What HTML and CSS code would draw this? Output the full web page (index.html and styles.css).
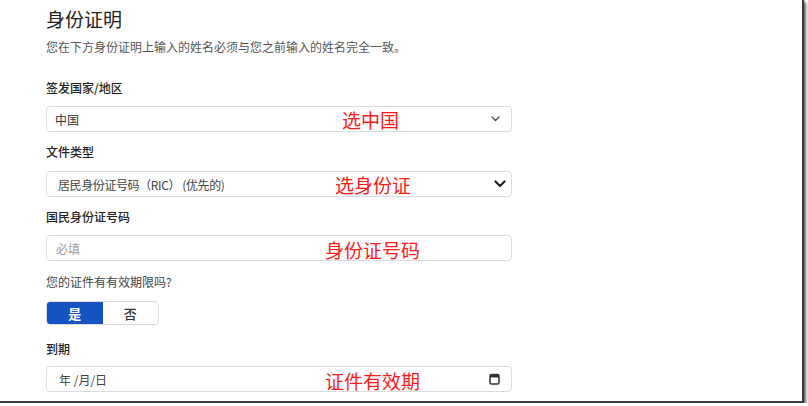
FILE: index.html
```html
<!DOCTYPE html>
<html lang="zh-CN">
<head>
<meta charset="utf-8">
<title>身份证明</title>
<link rel="stylesheet" href="styles.css">
</head>
<body>
<div class="frame">
  <div class="form">
    <h1 class="title">身份证明</h1>
    <p class="subtitle">您在下方身份证明上输入的姓名必须与您之前输入的姓名完全一致。</p>

    <div class="label l1">签发国家/地区</div>
    <div class="field select-a">
      <span class="value">中国</span>
      <svg class="chev-a" width="9" height="6" viewBox="0 0 9 6"><path d="M1 1l3.5 3.5L8 1" stroke="#4a4a4a" stroke-width="1.3" fill="none" stroke-linecap="round" stroke-linejoin="round"/></svg>
      <span class="note n1">选中国</span>
    </div>

    <div class="label l2">文件类型</div>
    <div class="field select-b">
      <span class="value">居民身份证号码（RIC） (优先的)</span>
      <svg class="chev-b" width="12" height="8" viewBox="0 0 12 8"><path d="M1.5 1.5L6 6l4.5-4.5" stroke="#222" stroke-width="2.2" fill="none" stroke-linecap="round" stroke-linejoin="round"/></svg>
      <span class="note n2">选身份证</span>
    </div>

    <div class="label l3">国民身份证号码</div>
    <div class="field text-input">
      <span class="placeholder">必填</span>
      <span class="note n3">身份证号码</span>
    </div>

    <div class="label question">您的证件有有效期限吗?</div>
    <div class="toggle">
      <span class="opt active">是</span>
      <span class="opt">否</span>
    </div>

    <div class="label l4">到期</div>
    <div class="field date-input">
      <span class="value date">年 /月/日</span>
      <svg class="cal" width="11" height="12" viewBox="0 0 11 12"><rect x="1" y="1.5" width="9" height="9.5" rx="1.5" stroke="#333" stroke-width="1.5" fill="none"/><rect x="1" y="1.5" width="9" height="3" fill="#333"/></svg>
      <span class="note n4">证件有效期</span>
    </div>
  </div>
</div>
</body>
</html>
```
FILE: styles.css
```css
html, body {
  margin: 0;
  padding: 0;
  background: #ffffff;
}
body {
  font-family: "Noto Sans CJK SC", "Liberation Sans", sans-serif;
  color: #222;
}
.frame {
  width: 802px;
  height: 401px;
  background: #fff;
  border-right: 2px solid #3c3c3c;
  border-bottom: 2px solid #3c3c3c;
  box-shadow: 1px 1px 2px rgba(0,0,0,0.55), 3px 3px 3px rgba(0,0,0,0.3);
  overflow: hidden;
}
.form {
  padding-left: 46px;
  width: 466px;
  display: flex;
  flex-direction: column;
}
.title {
  margin: 6px 0 0;
  font-size: 19px;
  line-height: 26px;
  font-weight: 400;
  color: #222;
}
.subtitle {
  margin: 6px 0 0;
  font-size: 12px;
  line-height: 18px;
  color: #555;
}
.label {
  font-size: 12px;
  line-height: 16px;
  font-weight: 500;
  color: #222;
}
.l1 { margin-top: 24px; }
.l2 { margin-top: 12px; }
.l3 { margin-top: 12px; }
.question { margin-top: 13px; font-weight: 400; color: #444; }
.l4 { margin-top: 16px; }

.field {
  position: relative;
  box-sizing: border-box;
  height: 26px;
  border: 1px solid #dcdcdc;
  border-radius: 4px;
  display: flex;
  align-items: center;
  justify-content: space-between;
  font-size: 12px;
  background: #fff;
}
.select-a { margin-top: 10px; padding: 0 11px 0 8px; }
.select-b { margin-top: 11px; padding: 0 5px 0 11px; }
.text-input { margin-top: 10px; padding: 0 9px; }
.date-input { margin-top: 9px; padding: 0 11px 0 12px; }
.value { color: #333; }
.select-b .value { color: #444; letter-spacing: -0.4px; }
.placeholder { color: #9a9a9a; }
.date { color: #444; }
.note {
  position: absolute;
  top: 50%;
  transform: translateY(-50%);
  font-size: 19px;
  line-height: 1;
  color: #ff1a1a;
  white-space: nowrap;
}
.n1 { left: 295px; }
.n2 { left: 288px; }
.n3 { left: 278px; margin-top: 1px; }
.n4 { left: 278px; margin-top: 1px; }

.toggle {
  margin-top: 11px;
  width: 113px;
  height: 24px;
  box-sizing: border-box;
  border: 1px solid #dcdcdc;
  border-radius: 4px;
  display: flex;
  overflow: hidden;
}
.opt {
  flex: 1;
  display: flex;
  align-items: center;
  justify-content: center;
  font-size: 13px;
  font-weight: 500;
  color: #333;
}
.opt.active {
  background: #1553c2;
  color: #fff;
  font-weight: 700;
}
```
